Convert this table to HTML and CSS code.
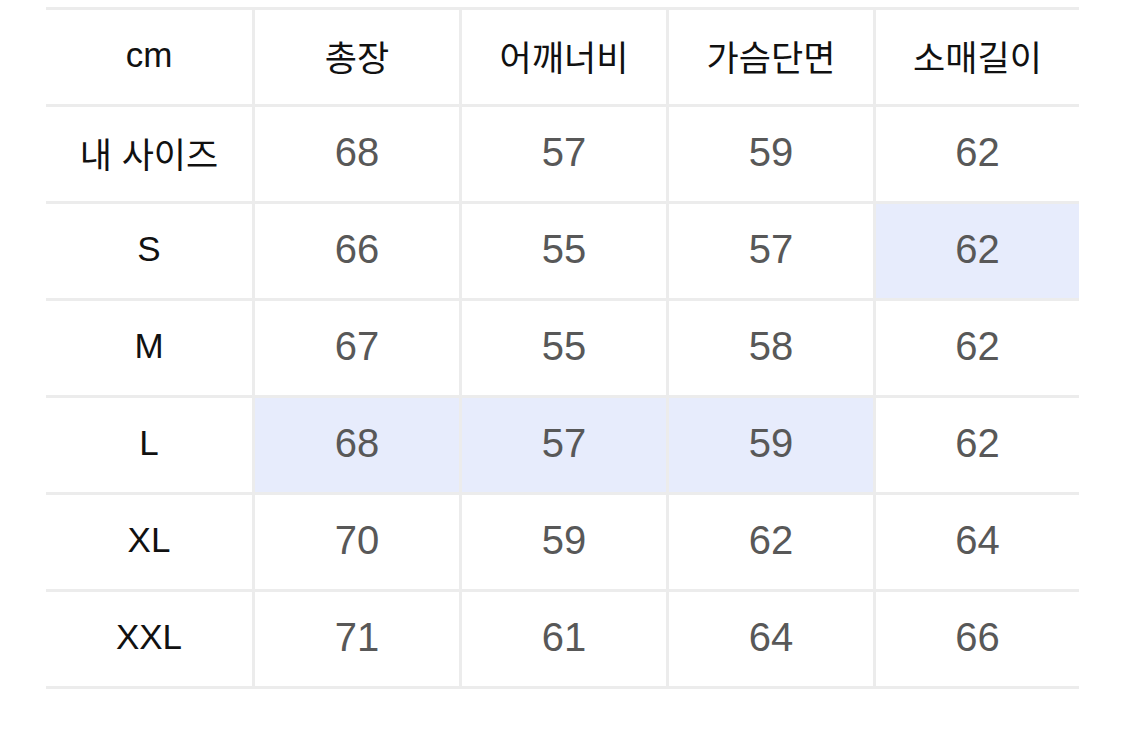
FILE: index.html
```html
<!DOCTYPE html>
<html lang="ko">
<head>
<meta charset="utf-8">
<title>사이즈표</title>
<link rel="stylesheet" href="styles.css">
</head>
<body>
<div class="size-table">
  <div class="cell head">cm</div>
  <div class="cell head">총장</div>
  <div class="cell head">어깨너비</div>
  <div class="cell head">가슴단면</div>
  <div class="cell head last">소매길이</div>

  <div class="cell label">내 사이즈</div>
  <div class="cell num">68</div>
  <div class="cell num">57</div>
  <div class="cell num">59</div>
  <div class="cell num last">62</div>

  <div class="cell label">S</div>
  <div class="cell num">66</div>
  <div class="cell num">55</div>
  <div class="cell num">57</div>
  <div class="cell num last hl">62</div>

  <div class="cell label">M</div>
  <div class="cell num">67</div>
  <div class="cell num">55</div>
  <div class="cell num">58</div>
  <div class="cell num last">62</div>

  <div class="cell label">L</div>
  <div class="cell num hl">68</div>
  <div class="cell num hl">57</div>
  <div class="cell num hl">59</div>
  <div class="cell num last">62</div>

  <div class="cell label">XL</div>
  <div class="cell num">70</div>
  <div class="cell num">59</div>
  <div class="cell num">62</div>
  <div class="cell num last">64</div>

  <div class="cell label">XXL</div>
  <div class="cell num">71</div>
  <div class="cell num">61</div>
  <div class="cell num">64</div>
  <div class="cell num last">66</div>
</div>
</body>
</html>
```

FILE: styles.css
```css
html, body {
  margin: 0;
  padding: 0;
  background: #ffffff;
}

body {
  padding: 7px 0 0 46px;
  font-family: "Liberation Sans", "Noto Sans CJK KR", sans-serif;
}

.size-table {
  width: 1033px;
  display: grid;
  grid-template-columns: 209px 207px 207px 207px 203px;
  grid-auto-rows: 97px;
  border-top: 3px solid #ececec;
}

.cell {
  display: flex;
  align-items: center;
  justify-content: center;
  border-bottom: 3px solid #ececec;
  border-right: 3px solid #ececec;
  box-sizing: border-box;
  padding-bottom: 4px;
}

.cell.last {
  border-right: none;
}

.head {
  font-size: 35px;
  color: #111111;
}

.label {
  font-size: 35px;
  color: #111111;
}

.num {
  font-size: 40px;
  color: #585858;
}

.hl {
  background: #e7ecfc;
}
```
